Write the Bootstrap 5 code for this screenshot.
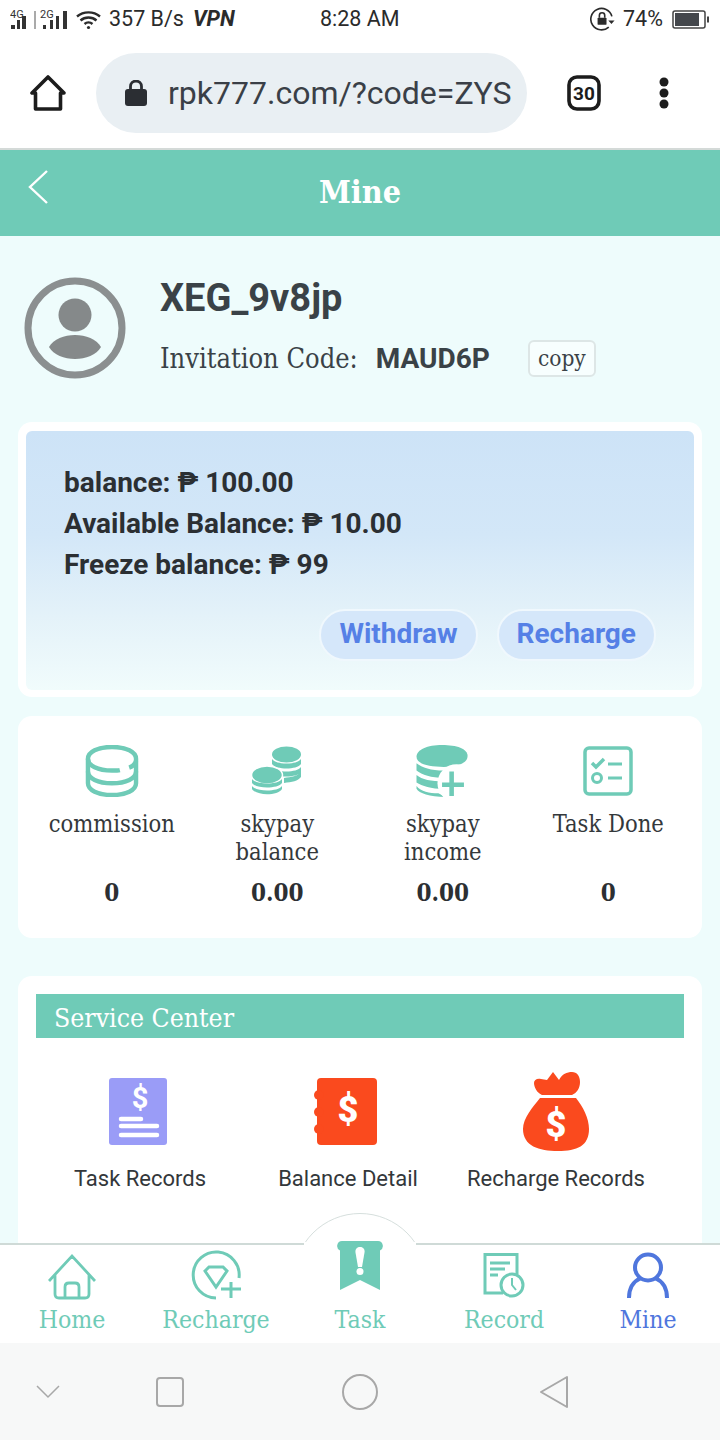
<!DOCTYPE html>
<html lang="en">
<head>
<meta charset="UTF-8">
<meta name="viewport" content="width=device-width, initial-scale=1.0">
<title>Mine</title>
<link href="https://cdn.jsdelivr.net/npm/bootstrap@5.3.0/dist/css/bootstrap.min.css" rel="stylesheet">
<style>
:root { --teal: #6fcbb7; --ink: #2f3337; }
html, body { height: 1440px; overflow: hidden; }
body { font-family: Roboto, sans-serif; color: var(--ink); background: #fff; }
.serif { font-family: "DejaVu Serif Condensed", "DejaVu Serif", serif; }
.phone { width: 720px; height: 1440px; }

.status-bar { height: 37px; padding: 2px 0 0 10px; font-size: 21.5px; color: #2b2b2b; flex: none; }
.status-left { width: 310px; }
.status-time { width: 270px; }
.status-vpn { font-weight: 700; font-style: italic; margin-left: 9px; }
.wifi-icon { margin-left: 8px; }
.speed-text { margin-left: 8px; }
.pct-text { margin-left: 8px; }
.batt-icon { margin-left: 9px; }

.browser-bar { height: 113px; padding-left: 30px; border-bottom: 2px solid #d4dad8; flex: none; }
.url-pill { width: 431px; height: 80px; margin-left: 30px; padding-left: 29px; border-radius: 40px; background: #e9eff3; font-size: 32px; color: #3a3f47; white-space: nowrap; }
.url-text { margin-left: 21px; }
.tab-count { margin-left: 40px; }
.more-dots { margin-left: 58px; }

.page-head { height: 86px; background: var(--teal); color: #fff; flex: none; }
.page-head h1 { font-size: 32px; font-weight: 700; margin: 0; padding-bottom: 1px; }
.back-arrow { left: 28px; top: 20px; }

.page-scroll { flex: 1 1 0; min-height: 0; overflow: hidden; background: #eefcfc; }
.profile-row { padding: 41px 0 0 24px; height: 186px; }
.profile-text { margin-left: 34px; }
.user-name { font-size: 38px; font-weight: 700; color: #3a4247; line-height: 44px; margin-top: -1px; }
.invite-line { font-size: 27px; margin-top: 20px; line-height: 36px; color: #3a4247; white-space: nowrap; }
.invite-code { font-family: Roboto, sans-serif; font-weight: 700; font-size: 28px; margin-left: 18px; }
.copy-tag { font-size: 22.5px; border: 2px solid #dde6e6; border-radius: 6px; padding: 0 8px; margin-left: 38px; line-height: 33px; height: 37px; background: #f7fefe; }

.white-panel { margin: 0 18px; background: #fff; border-radius: 14px; }
.balance-panel { padding: 9px 8px 7px; height: 275px; }
.balance-inner { height: 259px; border-radius: 6px; padding: 31px 38px 0; background: linear-gradient(180deg, #cde3f7 0%, #d3e7f8 40%, #e4f2f9 72%, #f1fcfc 100%); }
.balance-line { font-size: 28px; font-weight: 700; line-height: 41px; color: #2b2f33; }
.pill-row { margin-top: 24px; gap: 19px; }
.pill-btn { height: 52px; padding: 0 18px; border-radius: 26px; border: 2px solid #f0f8fd; background: #d5e7fa; color: #5580e6; font-size: 28px; font-weight: 700; line-height: 46px; }

.stats-panel { margin-top: 19px; height: 222px; padding-top: 29px; }
.stat-cell { width: 165.5px; flex: none; }
.stat-icon { height: 52px; display: block; margin: 0 auto; }
.stat-label { font-size: 23.5px; line-height: 28px; height: 56px; margin-top: 13px; color: #34383b; }
.stat-value { font-size: 24px; font-weight: 700; margin-top: 12px; line-height: 30px; color: #2c2f33; }

.service-panel { margin-top: 38px; height: 300px; padding: 18px; }
.service-head { height: 44px; background: var(--teal); color: #fff; font-size: 26.4px; line-height: 47px; padding-left: 18px; }
.service-cell { width: 208px; flex: none; font-size: 22px; color: #33373a; }
.service-icon { height: 74px; margin-bottom: 17px; display: block; margin-left: auto; margin-right: auto; }
.service-icon-tall { height: 80px; margin-bottom: 11px; }
.service-row { padding-top: 33px; }

.tab-bar { height: 100px; flex: none; background: #fff; border-top: 2px solid #cfdad7; z-index: 2; }
.tab-item { width: 144px; flex: none; font-size: 24.6px; line-height: 30px; color: var(--teal); margin-top: -4px; position: relative; }
.tab-item svg { height: 64px; display: block; margin: 0 auto; }
.tab-active { color: #4f76dd; }
.tab-bump { width: 134px; height: 134px; left: 293px; top: -32px; border-radius: 50%; background: #fff; border: 1px solid #d6dfdd; z-index: 0; clip-path: inset(0 0 104px 0); }
.tab-bump-fill { width: 112px; height: 4px; left: 304px; top: -3px; background: #fff; z-index: 0; }

.android-nav { height: 97px; flex: none; background: #f7f8f8; padding-left: 36px; }
.nav-square { margin-left: 96px; }
.nav-circle { margin-left: 158px; }
.nav-triangle { margin-left: 161px; }
</style>
</head>
<body>
<div class="phone d-flex flex-column">

  <div class="status-bar d-flex align-items-center">
    <div class="status-left d-flex align-items-center">
      <svg width="58" height="28" viewBox="0 -4 58 28" fill="#333">
        <text x="0" y="8" font-size="11" font-family="Roboto">4G</text>
        <path d="M1 15h4v4H1zM7 10h3v9H7zM12 6h4v13h-4z"/>
        <rect x="24" y="1" width="2" height="18" fill="#aaa"/>
        <text x="30" y="8" font-size="11" font-family="Roboto">2G</text>
        <path d="M33 15h3v4h-3zM40 10h3v9h-3zM46 6h3v13h-3zM53 1h4v18h-4z"/>
      </svg>
      <svg class="wifi-icon" width="25" height="20" viewBox="0 0 25 20" fill="none" stroke="#2b2b2b" stroke-width="2.400">
        <path d="M1 6.500c6.500-5.500 16.500-5.500 23 0M4.500 10.500c4.500-4 11.500-4 16 0M8.500 14c2.300-2 5.700-2 8 0"/>
        <circle cx="12.500" cy="17.500" r="1.600" fill="#2b2b2b" stroke="none"/>
      </svg>
      <span class="speed-text">357 B/s</span>
      <span class="status-vpn">VPN</span>
    </div>
    <div class="status-time">8:28 AM</div>
    <div class="d-flex align-items-center">
      <svg width="25" height="25" viewBox="0 0 28 28" fill="none" stroke="#2b2b2b" stroke-width="1.800">
        <path d="M21 22.500A12 12 0 1 1 24.500 10.500"/>
        <path d="M20.500 15h7l-3.500 4z" fill="#2b2b2b" stroke="none"/>
        <rect x="8.500" y="12" width="10" height="8" rx="1" fill="#2b2b2b" stroke="none"/>
        <path d="M10.500 12V9.500a3 3 0 0 1 6 0V12"/>
      </svg>
      <span class="pct-text">74%</span>
      <svg class="batt-icon" width="37" height="19" viewBox="0 0 37 19">
        <rect x="1" y="1" width="32" height="17" rx="2" fill="none" stroke="#444" stroke-width="1.500"/>
        <rect x="3" y="3" width="24" height="13" fill="#44474c"/>
        <rect x="35" y="6.500" width="2" height="6" fill="#444"/>
      </svg>
    </div>
  </div>

  <div class="browser-bar d-flex align-items-center">
    <svg width="36" height="36" viewBox="0 0 36 36" fill="none" stroke="#1c1c1c" stroke-width="3.600" stroke-linejoin="round">
      <path d="M18 2 2 18h3.500v16h25V18H34z"/>
    </svg>
    <div class="url-pill d-flex align-items-center">
      <svg width="22" height="26" viewBox="0 0 22 26" fill="#2b2e33">
        <rect x="0" y="9" width="22" height="17" rx="3"/>
        <path d="M5.500 10V6.500a5.500 5.500 0 0 1 11 0V10" fill="none" stroke="#2b2e33" stroke-width="2.800"/>
      </svg>
      <span class="url-text">rpk777.com/?code=ZYS</span>
    </div>
    <svg class="tab-count" width="34" height="36" viewBox="0 0 34 36">
      <rect x="2" y="2" width="30" height="32" rx="8" fill="none" stroke="#1c1c1c" stroke-width="3.600"/>
      <text x="17" y="25" text-anchor="middle" font-size="19" font-weight="700" font-family="Roboto" fill="#1c1c1c">30</text>
    </svg>
    <svg class="more-dots" width="10" height="32" viewBox="0 0 10 32" fill="#1c1c1c">
      <circle cx="5" cy="5" r="4.500"/><circle cx="5" cy="16" r="4.500"/><circle cx="5" cy="27" r="4.500"/>
    </svg>
  </div>

  <div class="page-head position-relative d-flex align-items-center justify-content-center">
    <svg class="back-arrow position-absolute" width="20" height="34" viewBox="0 0 20 34" fill="none" stroke="#fff" stroke-width="2.400">
      <path d="M19 1 2 17l17 16"/>
    </svg>
    <h1 class="serif">Mine</h1>
  </div>

  <div class="page-scroll">
    <div class="profile-row d-flex">
      <svg width="102" height="102" viewBox="0 0 102 102">
        <circle cx="51" cy="51" r="47" fill="none" stroke="#8b8f90" stroke-width="7"/>
        <circle cx="51" cy="38" r="16.500" fill="#85898a"/>
        <path d="M25 70c9-16 43-16 52 0-9 16-43 16-52 0z" fill="#85898a"/>
      </svg>
      <div class="profile-text">
        <div class="user-name">XEG_9v8jp</div>
        <div class="invite-line serif d-flex align-items-center">
          <span>Invitation Code:</span>
          <span class="invite-code">MAUD6P</span>
          <span class="copy-tag">copy</span>
        </div>
      </div>
    </div>

    <div class="white-panel balance-panel">
      <div class="balance-inner">
        <div class="balance-line">balance: ₱ 100.00</div>
        <div class="balance-line">Available Balance: ₱ 10.00</div>
        <div class="balance-line">Freeze balance: ₱ 99</div>
        <div class="pill-row d-flex justify-content-end">
          <span class="pill-btn">Withdraw</span>
          <span class="pill-btn">Recharge</span>
        </div>
      </div>
    </div>

    <div class="white-panel stats-panel d-flex justify-content-center text-center serif">
      <div class="stat-cell">
        <svg class="stat-icon" width="54" height="52" viewBox="0 0 54 53" fill="none" stroke="#6fcbb7" stroke-width="4.500">
          <path d="M2.500 14c0-7 10-12 24.500-12s24.500 5 24.500 12v25c0 7-10 12-24.500 12S2.500 46 2.500 39z"/>
          <path d="M2.500 14c0 7 10 12 24.500 12 3 0 6 0 8-.5M51.500 16c-1 4-4 6-7 7M2.500 27c0 7 10 12 24.500 12s24.500-5 24.500-12"/>
        </svg>
        <div class="stat-label">commission</div>
        <div class="stat-value">0</div>
      </div>
      <div class="stat-cell">
        <svg class="stat-icon" width="50" height="52" viewBox="0 -1 50 52" fill="#6fcbb7">
          <ellipse cx="34.500" cy="8.500" rx="14.500" ry="8"/>
          <path d="M20 13c4 6 25 6 29 0v5c-4 6-25 6-29 0zM20 21c4 6 25 6 29 0v5c-4 6-25 6-29 0zM32 32c7-1 14-2 17-6v5c-3 4-9 5-17 6z"/>
          <ellipse cx="15" cy="29" rx="15.500" ry="9" stroke="#fff" stroke-width="1.500"/>
          <path d="M0 33c4 6 26 6 30 0v4c-4 6-26 6-30 0zM0 40c4 6 26 6 30 0v3c-4 7-26 7-30 0z"/>
        </svg>
        <div class="stat-label">skypay<br>balance</div>
        <div class="stat-value">0.00</div>
      </div>
      <div class="stat-cell">
        <svg class="stat-icon" width="57" height="56" viewBox="0 0 57 57" fill="#6fcbb7">
          <path d="M0 13C0 5 12 0 28 0c16 0 28 4 28 12 0 8-12 12-26 12C14 24 0 21 0 13z"/>
          <path d="M0 20c6 5 16 8 30 8v8C16 36 6 33 0 28zM0 33c6 5 16 7 30 7v8C16 48 6 45 0 41zM0 45c5 6 14 8 24 8l8 4C14 57 3 53 0 48z"/>
          <circle cx="44" cy="42" r="21" fill="#fff"/>
          <path d="M36 29h5v12h11v5H41v10h-5V46H28v-5h8z"/>
        </svg>
        <div class="stat-label">skypay<br>income</div>
        <div class="stat-value">0.00</div>
      </div>
      <div class="stat-cell">
        <svg class="stat-icon" width="50" height="50" viewBox="0 0 50 50" fill="none" stroke="#6fcbb7">
          <rect x="2" y="2" width="46" height="46" rx="4" stroke-width="3.500"/>
          <path d="M9 17l4 4 8-8" stroke-width="3.500"/>
          <path d="M25 18h14M25 32h14" stroke-width="3"/>
          <circle cx="14" cy="32" r="4.500" stroke-width="3"/>
        </svg>
        <div class="stat-label">Task Done</div>
        <div class="stat-value">0</div>
      </div>
    </div>

    <div class="white-panel service-panel">
      <div class="service-head serif">Service Center</div>
      <div class="service-row d-flex text-center">
        <div class="service-cell">
          <svg class="service-icon" width="62" height="74" viewBox="0 0 62 74" fill="#9a9cf7">
            <rect x="0" y="7" width="58" height="67" rx="3"/>
            <path d="M12 48h20M12 55h36M12 64h36" stroke="#fff" stroke-width="4.500" stroke-linecap="round"/>
            <text x="31" y="37" text-anchor="middle" font-size="29" font-weight="700" font-family="Roboto" fill="#fff">$</text>
          </svg>
          <div>Task Records</div>
        </div>
        <div class="service-cell">
          <svg class="service-icon" width="68" height="74" viewBox="0 0 68 74" fill="#fa4a1e">
            <rect x="3" y="7" width="60" height="67" rx="4"/>
            <circle cx="5" cy="24" r="5"/><circle cx="5" cy="41" r="5"/><circle cx="5" cy="58" r="5"/>
            <text x="34" y="51" text-anchor="middle" font-size="36" font-weight="900" font-family="Roboto" fill="#fff">$</text>
          </svg>
          <div>Balance Detail</div>
        </div>
        <div class="service-cell">
          <svg class="service-icon service-icon-tall" width="68" height="80" viewBox="0 0 68 80" fill="#fa4a1e">
            <path d="M12 12c0-3 3-5 7-4l6 1 6-8 6 8c3-6 8-8 13-8 5 0 8 4 8 10 0 6-3 11-8 13H20C15 22 12 16 12 12z"/>
            <path d="M18 27h36c7 9 13 20 13 31 0 17-12 22-31 22S1 75 1 58c0-11 10-22 17-31z"/>
            <text x="34" y="66" text-anchor="middle" font-size="36" font-weight="900" font-family="Roboto" fill="#fff">$</text>
          </svg>
          <div>Recharge Records</div>
        </div>
      </div>
    </div>
  </div>

  <div class="tab-bar position-relative d-flex text-center serif">
    <div class="tab-bump position-absolute"></div>
    <div class="tab-bump-fill position-absolute"></div>
    <div class="tab-item">
      <svg width="48" height="64" viewBox="0 0 48 64" fill="none" stroke="#6fcbb7" stroke-width="2.800">
        <path d="M1 40 24 15l23 25M7 33v20q0 4 4 4h26q4 0 4-4V33M17 57V46q0-4 4-4h6q4 0 4 4v11"/>
      </svg>
      <div>Home</div>
    </div>
    <div class="tab-item">
      <svg width="50" height="64" viewBox="0 0 50 64" fill="none" stroke="#6fcbb7" stroke-width="3">
        <path d="M25 57A23 23 0 1 1 48 37"/>
        <path d="M14 30l4-4h14l4 4-11 16z"/>
        <path d="M40 41v16M30 48h20"/>
      </svg>
      <div>Recharge</div>
    </div>
    <div class="tab-item">
      <svg width="46" height="64" viewBox="0 0 46 64" fill="#6fcbb7">
        <path d="M5 0h36a5 5 0 0 1 2 9.500V49L23 39 3 49V9.500A5 5 0 0 1 5 0z"/>
        <path d="M23 6c3.500 0 5 2.500 4.500 5.500L25 26h-4l-2.500-14.500C18 8.500 19.500 6 23 6z" fill="#fff"/>
        <circle cx="23" cy="30.500" r="3.500" fill="#fff"/>
      </svg>
      <div>Task</div>
    </div>
    <div class="tab-item">
      <svg width="42" height="64" viewBox="0 0 42 64" fill="none" stroke="#6fcbb7" stroke-width="3">
        <path d="M20 52H2V13.500h32V33"/>
        <path d="M7 22h20M7 28h15M7 34h8"/>
        <circle cx="29" cy="44" r="11"/>
        <path d="M29 37v7l4 5" stroke-width="2"/>
      </svg>
      <div>Record</div>
    </div>
    <div class="tab-item tab-active">
      <svg width="42" height="64" viewBox="0 0 42 64" fill="none" stroke="#4f76dd" stroke-width="4">
        <circle cx="21" cy="26.500" r="13"/>
        <path d="M2 57c0-11 5-17 12-20M40 57c0-11-5-17-12-20"/>
      </svg>
      <div>Mine</div>
    </div>
  </div>

  <div class="android-nav position-relative d-flex align-items-center">
    <svg width="24" height="14" viewBox="0 0 24 14" fill="none" stroke="#a8a8a8" stroke-width="1.500"><path d="M1 1l11 11L23 1"/></svg>
    <svg class="nav-square" width="28" height="30" viewBox="0 0 28 30" fill="none" stroke="#a8a8a8" stroke-width="2"><rect x="1" y="1" width="26" height="28" rx="3"/></svg>
    <svg class="nav-circle" width="36" height="36" viewBox="0 0 36 36" fill="none" stroke="#a8a8a8" stroke-width="2"><circle cx="18" cy="18" r="17"/></svg>
    <svg class="nav-triangle" width="30" height="34" viewBox="0 0 30 34" fill="none" stroke="#a8a8a8" stroke-width="2" stroke-linejoin="round"><path d="M28 2v30L2 17z"/></svg>
  </div>
</div>
</body>
</html>
